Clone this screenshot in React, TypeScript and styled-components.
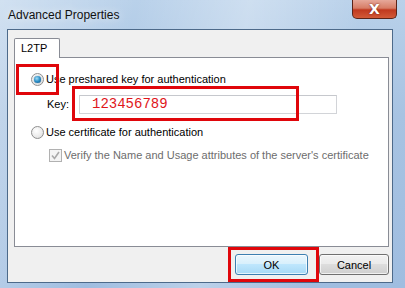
import styled, { createGlobalStyle } from "styled-components";

const Global = createGlobalStyle`
  html, body {
    margin: 0;
    padding: 0;
    background: #7fa3c6;
  }
  body {
    font-family: "Liberation Sans", Arial, sans-serif;
    font-size: 11px;
    color: #000;
  }
`;

const Window = styled.div`
  position: relative;
  width: 405px;
  height: 288px;
  overflow: hidden;
  display: flex;
  flex-direction: column;
  background: linear-gradient(
      100deg,
      rgba(255, 255, 255, 0.35) 0%,
      rgba(255, 255, 255, 0) 30%,
      rgba(255, 255, 255, 0.3) 55%,
      rgba(255, 255, 255, 0) 80%
    ),
    linear-gradient(180deg, #b9d1ea 0%, #a7c3e2 40%, #9fbde0 100%);
  box-sizing: border-box;
`;

const TitleBar = styled.div`
  height: 29px;
  display: flex;
  align-items: flex-start;
  justify-content: space-between;
  padding-left: 8px;
  padding-right: 8px;
`;

const Title = styled.span`
  margin-top: 8px;
  font-size: 12px;
  color: #111;
  text-shadow: 0 0 8px rgba(255, 255, 255, 0.9);
`;

const CloseButton = styled.div`
  width: 45px;
  height: 19px;
  box-sizing: border-box;
  border: 1px solid #5a2419;
  border-top: none;
  border-radius: 0 0 5px 5px;
  background: linear-gradient(180deg, #e6a89a 0%, #d77d66 45%, #c0391f 55%, #d25a38 100%);
  display: flex;
  align-items: center;
  justify-content: center;
  color: #fff;
  font-weight: bold;
  font-size: 14px;
  font-family: "DejaVu Sans", sans-serif;
  text-shadow: 0 0 2px #6b1a0a;
`;

const Client = styled.div`
  margin-left: 7px;
  width: 386px;
  height: 254px;
  box-sizing: border-box;
  border: 1px solid #4d6a8a;
  background: #f0f0f0;
  padding: 8px 3px 0 6px;
  display: flex;
  flex-direction: column;
`;

const TabStrip = styled.div`
  display: flex;
  height: 19px;
`;

const Tab = styled.div`
  width: 46px;
  box-sizing: border-box;
  border: 1px solid #898c95;
  border-bottom: none;
  border-radius: 2px 2px 0 0;
  background: #fff;
  padding: 3px 0 0 6px;
  margin-bottom: -1px;
  position: relative;
  z-index: 1;
  height: 20px;
`;

const Panel = styled.div`
  width: 375px;
  height: 190px;
  box-sizing: border-box;
  border: 1px solid #898c95;
  background: #fff;
  padding: 14px 0 0 16px;
  display: flex;
  flex-direction: column;
`;

const OptionRow = styled.label<{ $indent?: number; $muted?: boolean }>`
  display: flex;
  align-items: center;
  gap: 2px;
  height: 14px;
  padding-left: ${(p) => p.$indent ?? 0}px;
  color: ${(p) => (p.$muted ? "#6d6d6d" : "#000")};
`;

const Radio = styled.span<{ $checked?: boolean }>`
  width: 13px;
  height: 13px;
  box-sizing: border-box;
  border-radius: 50%;
  border: 1px solid #8f8f8f;
  background: radial-gradient(circle at 40% 35%, #ffffff 0%, #eaeaea 60%, #d4d4d4 100%);
  display: flex;
  align-items: center;
  justify-content: center;
  flex-shrink: 0;

  &::after {
    content: "";
    display: ${(p) => (p.$checked ? "block" : "none")};
    width: 7px;
    height: 7px;
    border-radius: 50%;
    background: radial-gradient(circle at 40% 35%, #9fdcf7 0%, #2b8ec5 50%, #0b4f86 100%);
    box-shadow: 0 0 1px #0a3d66;
  }
`;

const Check = styled.span`
  width: 13px;
  height: 13px;
  box-sizing: border-box;
  border: 1px solid #b1b1b1;
  background: #f4f4f4;
  display: flex;
  align-items: center;
  justify-content: center;
  flex-shrink: 0;
`;

const KeyRow = styled.div`
  display: flex;
  align-items: center;
  margin-top: 8px;
  padding-left: 16px;
  gap: 10px;
  height: 20px;
`;

const KeyInput = styled.div`
  width: 258px;
  height: 19px;
  box-sizing: border-box;
  border: 1px solid #d2d4d8;
  border-top-color: #c6c8cd;
  background: #fff;
  padding-left: 12px;
  display: flex;
  align-items: center;
  color: #e0161b;
  font-family: "Liberation Mono", "DejaVu Sans Mono", monospace;
  font-size: 14px;
`;

const Spacer = styled.div<{ $h: number }>`
  height: ${(p) => p.$h}px;
  flex-shrink: 0;
`;

const ButtonRow = styled.div`
  display: flex;
  justify-content: flex-end;
  gap: 11px;
  padding-top: 7px;
`;

const Button = styled.div<{ $default?: boolean; $w: number }>`
  width: ${(p) => p.$w}px;
  height: 21px;
  box-sizing: border-box;
  border: 1px solid ${(p) => (p.$default ? "#3c7fb1" : "#707070")};
  border-radius: 3px;
  background: ${(p) =>
    p.$default
      ? "linear-gradient(180deg, #eaf6fd 0%, #d9f0fc 45%, #bee6fd 50%, #a7d9f5 100%)"
      : "linear-gradient(180deg, #f2f2f2 0%, #ebebeb 45%, #dddddd 50%, #cfcfcf 100%)"};
  box-shadow: inset 0 0 0 1px rgba(255, 255, 255, 0.7);
  display: flex;
  align-items: center;
  justify-content: center;
`;

const Annotation = styled.div<{ $x: number; $y: number; $w: number; $h: number }>`
  position: absolute;
  left: ${(p) => p.$x}px;
  top: ${(p) => p.$y}px;
  width: ${(p) => p.$w}px;
  height: ${(p) => p.$h}px;
  box-sizing: border-box;
  border: 3px solid #e0060b;
  pointer-events: none;
`;

export default function App() {
  return (
    <>
      <Global />
      <Window>
        <TitleBar>
          <Title>Advanced Properties</Title>
          <CloseButton>X</CloseButton>
        </TitleBar>
        <Client>
          <TabStrip>
            <Tab>L2TP</Tab>
          </TabStrip>
          <Panel>
            <OptionRow>
              <Radio $checked />
              Use preshared key for authentication
            </OptionRow>
            <KeyRow>
              <span>Key:</span>
              <KeyInput>123456789</KeyInput>
            </KeyRow>
            <Spacer $h={11} />
            <OptionRow>
              <Radio />
              Use certificate for authentication
            </OptionRow>
            <Spacer $h={9} />
            <OptionRow $indent={18} $muted>
              <Check>
                <svg width="9" height="9" viewBox="0 0 9 9">
                  <path d="M1 4.5 L3.5 7.5 L8 1" fill="none" stroke="#a9a9a9" strokeWidth="1.6" />
                </svg>
              </Check>
              Verify the Name and Usage attributes of the server's certificate
            </OptionRow>
          </Panel>
          <ButtonRow>
            <Button $default $w={73}>OK</Button>
            <Button $w={70}>Cancel</Button>
          </ButtonRow>
        </Client>
        <Annotation $x={16} $y={64} $w={43} $h={31} />
        <Annotation $x={72} $y={86} $w={227} $h={35} />
        <Annotation $x={228} $y={247} $w={91} $h={35} />
      </Window>
    </>
  );
}
